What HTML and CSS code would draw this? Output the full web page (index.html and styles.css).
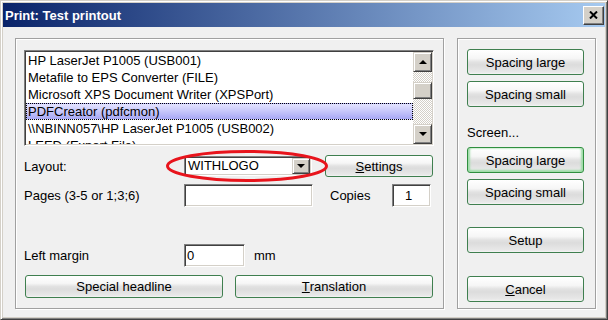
FILE: index.html
```html
<!DOCTYPE html>
<html lang="en">
  <head>
    <meta charset="UTF-8" />
    <title>Print: Test printout</title>
    <link rel="stylesheet" href="styles.css">
  </head>
  <body>
    <div class="window">
      <div class="titlebar">
        <span class="title">Print: Test printout</span>
        <span class="close">
          <svg width="9" height="8" viewBox="0 0 9 8"><path d="M1 0.5 L8 7.5 M8 0.5 L1 7.5" stroke="#000" stroke-width="2" /></svg>
        </span>
      </div>

      <div class="content">
        <div class="group group-main">
          <div class="listbox">
            <ul class="items">
              <li>HP LaserJet P1005 (USB001)</li>
              <li>Metafile to EPS Converter (FILE)</li>
              <li>Microsoft XPS Document Writer (XPSPort)</li>
              <li class="selected">PDFCreator (pdfcmon)</li>
              <li>\\NBINN057\HP LaserJet P1005 (USB002)</li>
              <li>LEED (Export File)</li>
            </ul>
            <div class="scrollbar">
              <span class="sb-btn"><span class="arrow up"></span></span>
              <span class="sb-track"><span class="sb-thumb"></span></span>
              <span class="sb-btn"><span class="arrow down"></span></span>
            </div>
          </div>

          <div class="row row-layout">
            <span class="label">Layout:</span>
            <div class="combo">
              <span class="combo-value">WITHLOGO</span>
              <span class="combo-btn"><span class="arrow down"></span></span>
            </div>
            <span class="btn btn-settings"><u>S</u>ettings</span>
            <svg class="mark" width="164" height="34" viewBox="0 0 164 34">
              <ellipse cx="82" cy="17" rx="79.5" ry="14.5" fill="none" stroke="#e8141c" stroke-width="3" />
            </svg>
          </div>

          <div class="row row-pages">
            <span class="label">Pages (3-5 or 1;3;6)</span>
            <span class="field field-pages"></span>
            <span class="label label-copies">Copies</span>
            <span class="field field-copies">1</span>
          </div>

          <div class="row row-margin">
            <span class="label">Left margin</span>
            <span class="field field-margin">0</span>
            <span class="label label-mm">mm</span>
          </div>

          <div class="row row-buttons">
            <span class="btn btn-wide">Special headline</span>
            <span class="btn btn-wide"><u>T</u>ranslation</span>
          </div>
        </div>

        <div class="group group-side">
          <span class="btn btn-side">Spacing large</span>
          <span class="btn btn-side">Spacing small</span>
          <span class="side-label">Screen...</span>
          <span class="btn btn-side btn-hot">Spacing large</span>
          <span class="btn btn-side">Spacing small</span>
          <span class="btn btn-side btn-setup">Setup</span>
          <span class="btn btn-side btn-cancel"><u>C</u>ancel</span>
        </div>
      </div>
    </div>
  </body>
</html>
```

FILE: styles.css
```css
body {
  margin: 0;
  font-family: "Liberation Sans", Arial, sans-serif;
  font-size: 13px;
  color: #000;
  background: #d4d0c8;
}

.window {
  width: 608px;
  height: 320px;
  box-sizing: border-box;
  border: 1px solid;
  border-color: #d4d0c8 #404040 #404040 #d4d0c8;
  box-shadow: inset 1px 1px #fff, inset -1px -1px #808080;
  padding: 2px;
  background: #d4d0c8;
  display: flex;
  flex-direction: column;
}

.titlebar {
  height: 24px;
  display: flex;
  align-items: center;
  justify-content: space-between;
  background: linear-gradient(to right, #0a246a, #a6caf0);
}

.title {
  padding-left: 2px;
  color: #fff;
  font-weight: bold;
  font-size: 13px;
  font-family: "Liberation Sans", sans-serif;
}

.close {
  width: 21px;
  height: 19px;
  margin-right: 1px;
  box-sizing: border-box;
  background: #d4d0c8;
  border: 1px solid;
  border-color: #fff #404040 #404040 #fff;
  box-shadow: inset -1px -1px #808080;
  display: flex;
  align-items: center;
  justify-content: center;
}

.content {
  flex: 1;
  display: flex;
  gap: 13px;
  padding: 11px 0 0 12px;
  background: #f0f0f0;
}

.group {
  height: 271px;
  box-sizing: border-box;
  border: 1px solid #a0a0a0;
  box-shadow: inset 1px 1px #fff, 1px 1px #fff;
}

.group-main {
  width: 429px;
  padding: 11px 0 0 8px;
}

.group-side {
  width: 139px;
  padding: 10px 0 0 9px;
  display: flex;
  flex-direction: column;
  align-items: flex-start;
}

/* list of printers */
.listbox {
  width: 410px;
  height: 96px;
  box-sizing: border-box;
  border: 1px solid;
  border-color: #808080 #fff #fff #808080;
  box-shadow: inset 1px 1px #404040, inset -1px -1px #d4d0c8;
  padding: 1px;
  background: #fff;
  display: flex;
  overflow: hidden;
}

.items {
  flex: 1;
  list-style: none;
  margin: 0;
  padding: 0;
  overflow: hidden;
}

.items li {
  height: 17px;
  line-height: 17px;
  padding-left: 2px;
  white-space: nowrap;
}

.items .selected {
  box-sizing: border-box;
  line-height: 15px;
  padding-left: 1px;
  border: 1px dotted #000;
  background: linear-gradient(#e4e4ff, #a8a8f4);
}

.scrollbar {
  width: 19px;
  display: flex;
  flex-direction: column;
}

.sb-btn,
.combo-btn {
  box-sizing: border-box;
  background: #d4d0c8;
  border: 1px solid;
  border-color: #d4d0c8 #404040 #404040 #d4d0c8;
  box-shadow: inset 1px 1px #fff, inset -1px -1px #808080;
  display: flex;
  align-items: center;
  justify-content: center;
}

.sb-btn {
  height: 20px;
}

.sb-track {
  flex: 1;
  padding-top: 10px;
  background: repeating-conic-gradient(#d4d0c8 0 25%, #fff 0 50%) 0 0 / 2px 2px;
}

.sb-thumb {
  display: block;
  height: 17px;
  box-sizing: border-box;
  background: #d4d0c8;
  border: 1px solid;
  border-color: #d4d0c8 #404040 #404040 #d4d0c8;
  box-shadow: inset 1px 1px #fff, inset -1px -1px #808080;
}

.arrow {
  width: 0;
  height: 0;
  border-left: 4px solid transparent;
  border-right: 4px solid transparent;
}

.arrow.up {
  border-bottom: 4px solid #000;
}

.arrow.down {
  border-top: 4px solid #000;
}

/* rows under the list */
.row {
  display: flex;
  align-items: center;
}

.label {
  width: 160px;
  white-space: nowrap;
}

.row-layout {
  position: relative;
  height: 22px;
  margin-top: 9px;
}

.combo {
  width: 128px;
  height: 20px;
  box-sizing: border-box;
  border: 1px solid;
  border-color: #808080 #fff #fff #808080;
  box-shadow: inset 1px 1px #404040, inset -1px -1px #d4d0c8;
  padding: 1px;
  background: #fff;
  display: flex;
}

.combo-value {
  flex: 1;
  padding-left: 2px;
  line-height: 16px;
}

.combo-btn {
  width: 18px;
}

.mark {
  position: absolute;
  left: 141px;
  top: -6px;
}

.row-pages {
  height: 23px;
  margin-top: 7px;
}

.row-margin {
  height: 23px;
  margin-top: 37px;
}

.row-buttons {
  height: 23px;
  margin-top: 8px;
  padding-left: 1px;
  gap: 12px;
}

.field {
  height: 23px;
  box-sizing: border-box;
  border: 1px solid;
  border-color: #808080 #fff #fff #808080;
  box-shadow: inset 1px 1px #404040, inset -1px -1px #d4d0c8;
  background: #fff;
  padding: 3px 0 0 3px;
}

.field-pages {
  width: 129px;
}

.label-copies {
  width: 62px;
  margin-left: 17px;
}

.field-copies {
  width: 39px;
  padding-left: 12px;
}

.field-margin {
  width: 61px;
  padding-left: 2px;
}

.label-mm {
  width: auto;
  margin-left: 9px;
}

/* buttons */
.btn {
  box-sizing: border-box;
  border: 1px solid #3f7f4f;
  border-radius: 3px;
  background: linear-gradient(#ffffff 0%, #f6f6f6 35%, #e2e2e2 50%, #dcdcdc 62%, #e8e8e8 92%, #f4f4f4 100%);
  display: flex;
  align-items: center;
  justify-content: center;
  white-space: nowrap;
}

.btn-settings {
  width: 108px;
  height: 22px;
  margin-left: 13px;
}

.btn-wide {
  width: 198px;
  height: 23px;
}

.btn-side {
  width: 117px;
  height: 26px;
  margin-bottom: 6px;
}

.btn-hot {
  border-color: #2f8f3f;
  box-shadow: inset 2px 0 2px #9fdca8, inset -2px 0 2px #9fdca8, inset 0 -2px 2px #9fdca8;
}

.side-label {
  margin: 12px 0 6px;
  line-height: 16px;
}

.btn-setup {
  margin-top: 16px;
}

.btn-cancel {
  margin-top: 17px;
}
```
